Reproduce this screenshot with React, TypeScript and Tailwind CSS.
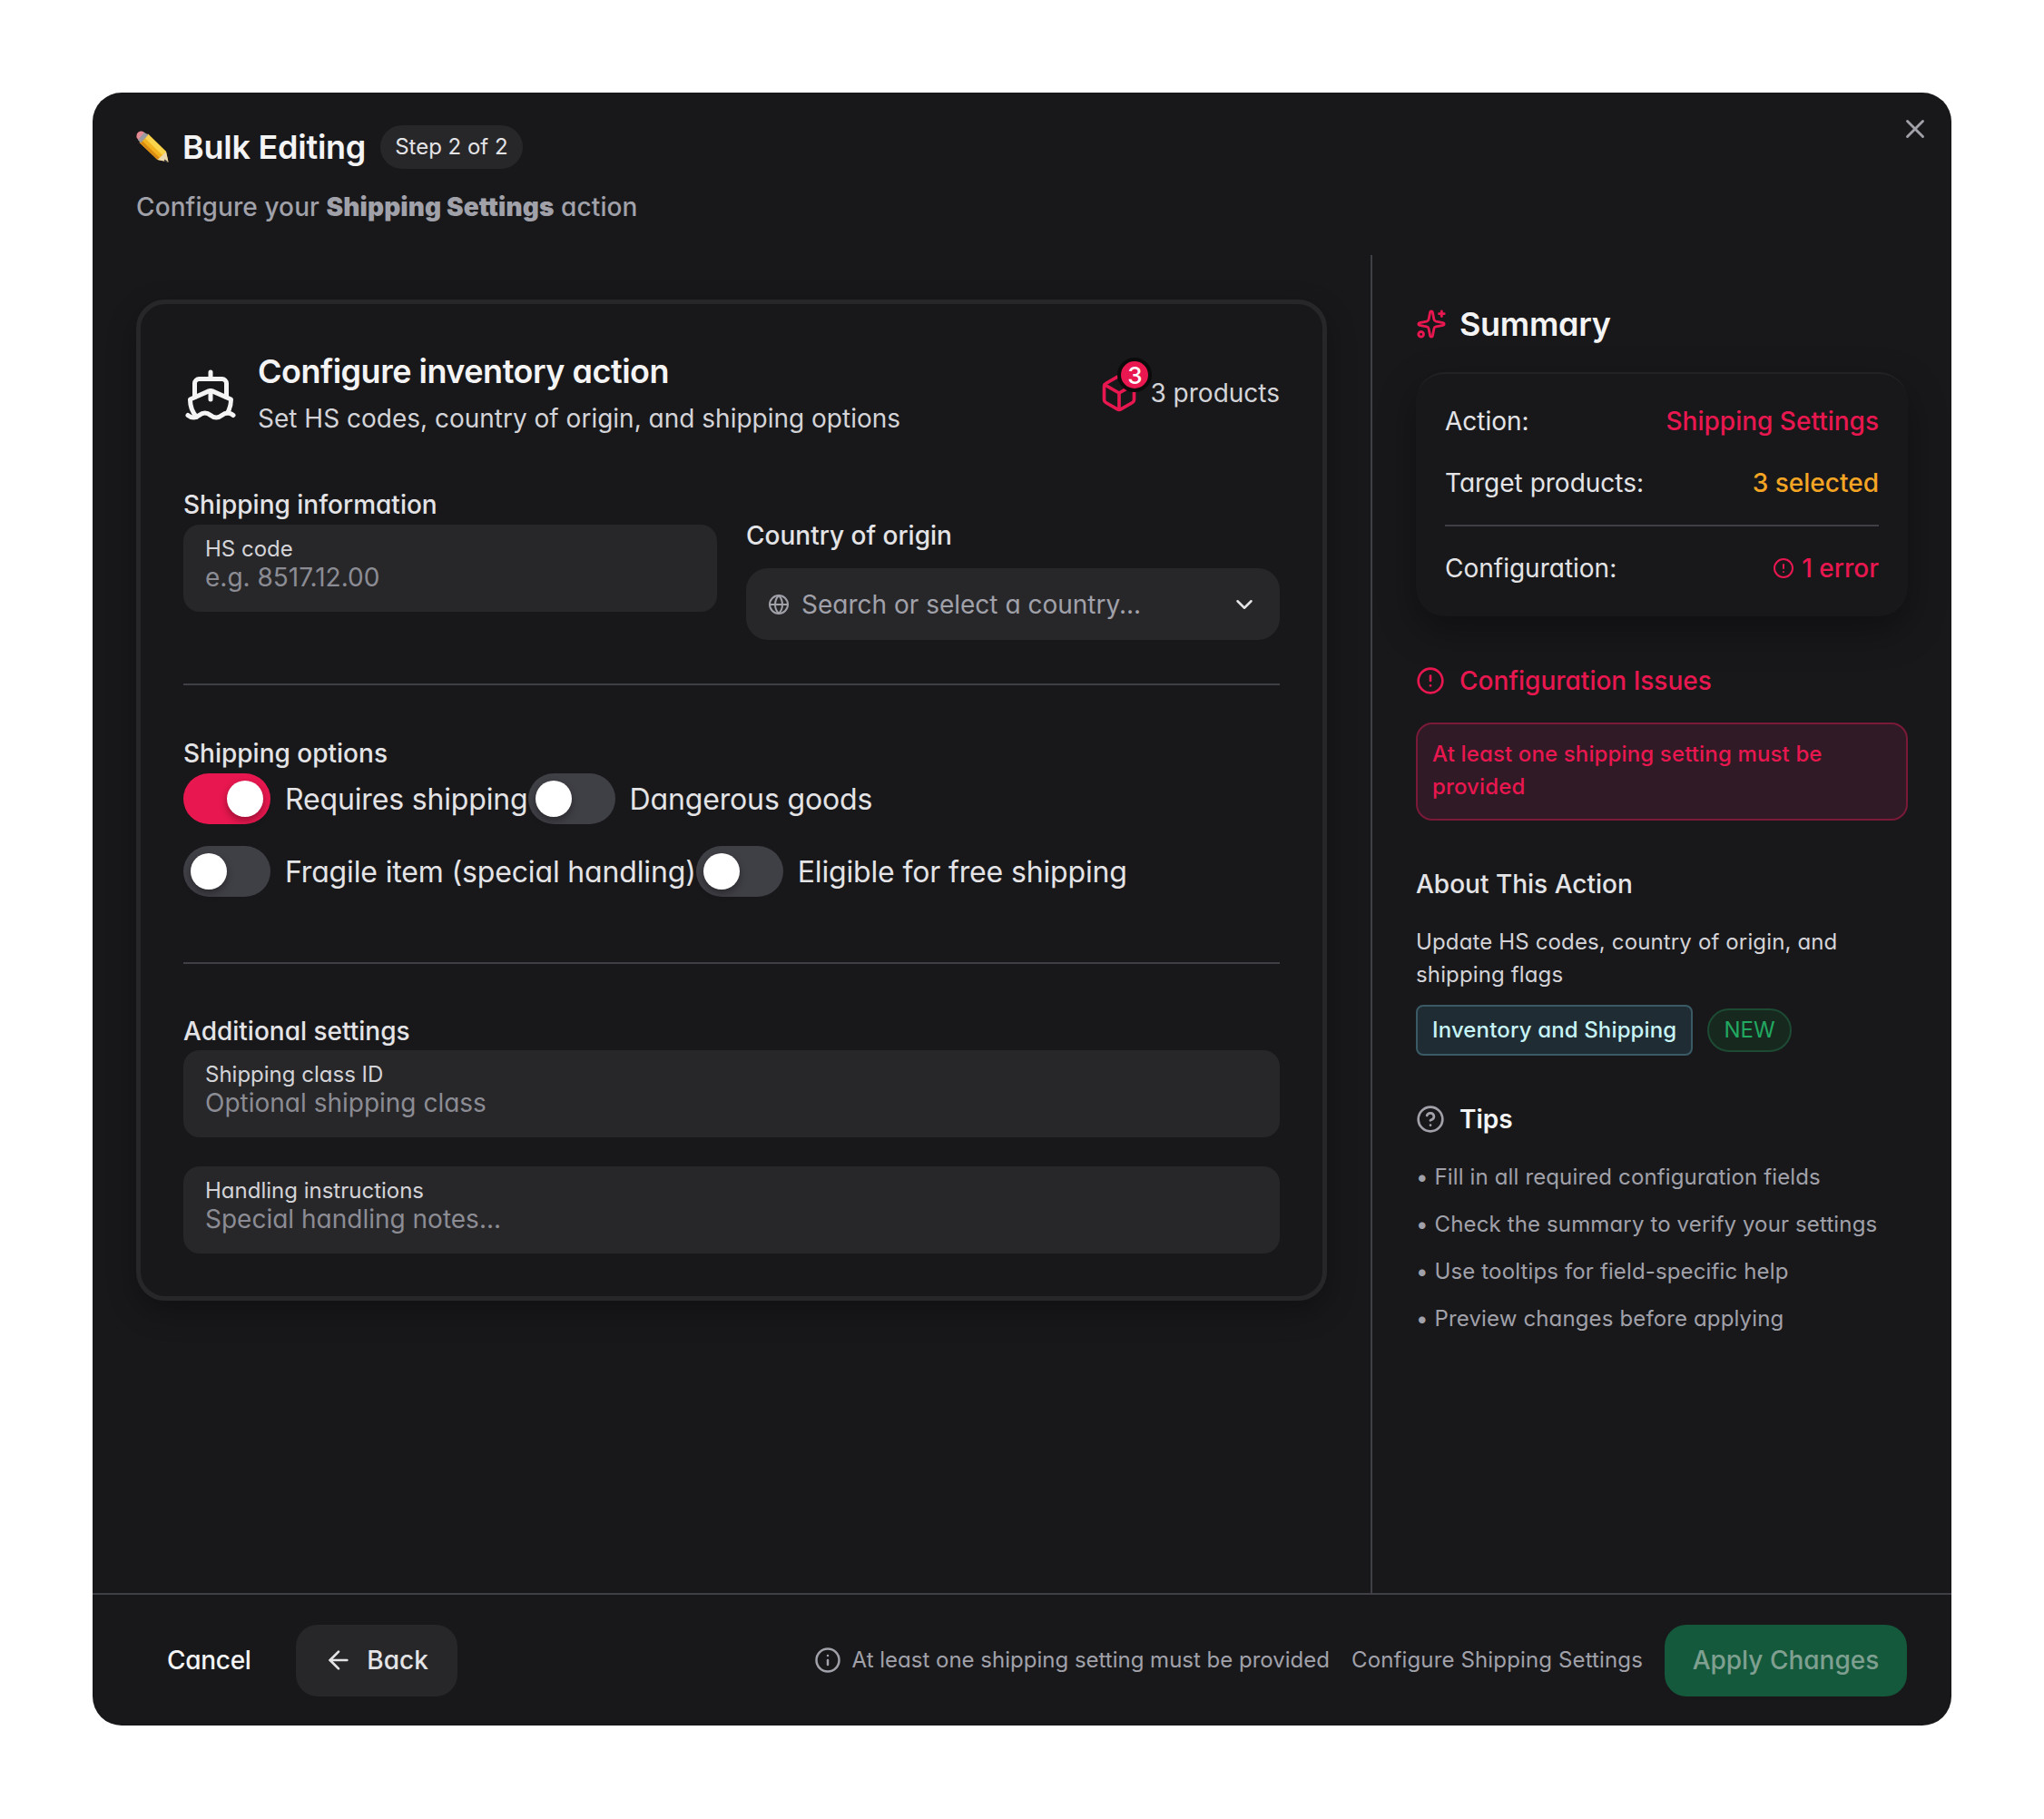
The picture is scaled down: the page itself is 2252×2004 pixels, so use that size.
import { ArrowLeft, Box, ChevronDown, CircleAlert, CircleHelp, Globe, Info, Ship, Sparkles, X } from "lucide-react"

function Pencil() {
  return (
    <svg width="36" height="36" viewBox="0 0 36 36" className="shrink-0">
      <path d="M3.500 13 L13 3.500 L33 23 L35.500 34.500 L23.500 32 Z" fill="#f5b21f" />
      <path d="M9 7.500 L13 3.500 L33 23 L29 27 Z" fill="#fcd34d" />
      <path d="M3.500 13 L6 10.500 L26 30 L23.500 32 Z" fill="#d98a13" />
      <path d="M0.500 7.500 Q0 3 2.500 1.500 Q5.500 -0.500 8.500 1.500 L10 3 L3 11 Z" fill="#e58a93" />
      <path d="M2 10 L9 2 L13.500 4.500 L5 13.500 Z" fill="#9a9aa0" />
      <path d="M23.500 32 L29 27 L33 23 L35.500 34.500 Z" fill="#efd9b0" />
      <path d="M31.500 31.500 L35.500 34.500 L30.500 33.800 Z" fill="#3a3a3a" />
    </svg>
  )
}

function Toggle({ on, label }: { on?: boolean; label: string }) {
  return (
    <div className="flex items-center gap-4">
      <div className={`flex h-14 w-24 items-center rounded-full p-2 ${on ? "justify-end bg-[#e8174f]" : "justify-start bg-[#3f3f46]"}`}>
        <div className="size-10 rounded-full bg-white shadow-[0_4px_8px_rgba(0,0,0,0.35)]" />
      </div>
      <span className="mt-[2px] text-[32px] leading-[48px] tracking-[-0.15px] text-[#e4e4e7]">{label}</span>
    </div>
  )
}

function InlineField({ label, value }: { label: string; value: string }) {
  return (
    <div className="h-24 rounded-[18px] bg-[#27272a] px-6 pt-3">
      <div className="text-2xl leading-[30px] text-[#d4d4d8]">{label}</div>
      <div className="text-[28px] leading-[32px] text-[#8c8c94]">{value}</div>
    </div>
  )
}

function SummaryRow({ label, children }: { label: string; children: React.ReactNode }) {
  return (
    <div className="flex items-center justify-between text-[28px] leading-[44px]">
      <span className="text-[#e4e4e7]">{label}</span>
      {children}
    </div>
  )
}

const tips = [
  "Fill in all required configuration fields",
  "Check the summary to verify your settings",
  "Use tooltips for field-specific help",
  "Preview changes before applying",
]

export default function App() {
  return (
    <div className="min-h-[2004px] bg-white pl-[102px] pt-[102px] font-[Inter,sans-serif] [font-feature-settings:'cv11']">
      <div className="relative flex h-[1799px] w-[2048px] flex-col rounded-[32px] bg-[#18181b]">
        <button className="absolute right-[23px] top-[23px] text-[#a1a1aa]">
          <X size={34} />
        </button>

        {/* Header */}
        <div className="h-[179px] shrink-0 px-12 pt-9">
          <div className="flex items-center">
            <Pencil />
            <h1 className="ml-[15px] text-4xl font-semibold leading-[48px] tracking-[-0.25px] text-[#f4f4f5]">Bulk Editing</h1>
            <span className="ml-4 rounded-full bg-[#27272a] px-4 py-[6px] text-2xl leading-[36px] text-[#e4e4e7]">Step 2 of 2</span>
          </div>
          <p className="mt-5 text-[28px] font-medium leading-[44px] tracking-[0.1px] text-[#a1a1aa]">
            Configure your <b className="font-black">Shipping Settings</b> action
          </p>
        </div>

        <div className="flex min-h-0 flex-1">
          {/* Left column */}
          <div className="flex-1 pl-12 pr-12 pt-[49px]">
            <div className="h-[1103px] rounded-[32px] border-[5px] border-[#27272a] px-[47px] shadow-[0_12px_32px_rgba(0,0,0,0.3)]">
              <div className="flex items-start justify-between pt-[50px]">
                <div className="flex items-center gap-[22px]">
                  <Ship size={60} strokeWidth={2} className="text-[#f4f4f5]" />
                  <div>
                    <h2 className="text-4xl font-semibold leading-[48px] tracking-[-0.5px] text-[#f4f4f5]">Configure inventory action</h2>
                    <p className="mt-1 text-[28px] leading-[48px] text-[#d4d4d8]">Set HS codes, country of origin, and shipping options</p>
                  </div>
                </div>
                <div className="mt-[26px] flex items-center gap-3">
                  <div className="relative size-11">
                    <Box size={44} className="text-[#e8174f]" />
                    <span className="absolute left-[20px] top-[-17px] flex size-[38px] items-center justify-center rounded-full border-4 border-[#0b0b0c] bg-[#e8174f] text-[26px] font-medium text-white">3</span>
                  </div>
                  <span className="text-[28px] leading-[44px] text-[#d4d4d8]">3 products</span>
                </div>
              </div>

              <div className="mt-[51px] flex gap-8">
                <div className="flex-1">
                  <div className="text-[28px] font-medium leading-[40px] text-[#e4e4e7]">Shipping information</div>
                  <div className="mt-[2px]">
                    <InlineField label="HS code" value="e.g. 8517.12.00" />
                  </div>
                </div>
                <div className="flex-1 pt-[32px]">
                  <div className="text-[28px] font-medium leading-[44px] text-[#e4e4e7]">Country of origin</div>
                  <div className="mt-[14px] flex h-[79px] items-center rounded-[24px] bg-[#27272a] px-6 text-[#a1a1aa]">
                    <Globe size={24} />
                    <span className="ml-[13px] flex-1 text-[28px]">Search or select a country...</span>
                    <ChevronDown size={30} className="text-[#e4e4e7]" />
                  </div>
                </div>
              </div>

              <div className="mt-[48px] h-[2px] bg-[#3f3f46]" />

              <div className="mt-[55px] text-[28px] font-medium leading-[40px] text-[#e4e4e7]">Shipping options</div>
              <div className="mt-[2px] flex flex-col gap-6">
                <div className="flex">
                  <Toggle on label="Requires shipping" />
                  <Toggle label="Dangerous goods" />
                </div>
                <div className="flex">
                  <Toggle label="Fragile item (special handling)" />
                  <Toggle label="Eligible for free shipping" />
                </div>
              </div>

              <div className="mt-[72px] h-[2px] bg-[#3f3f46]" />

              <div className="mt-[54px] text-[28px] font-medium leading-[40px] text-[#e4e4e7]">Additional settings</div>
              <div className="mt-px flex flex-col gap-8">
                <InlineField label="Shipping class ID" value="Optional shipping class" />
                <InlineField label="Handling instructions" value="Special handling notes..." />
              </div>
            </div>
          </div>

          {/* Summary column */}
          <div className="w-[640px] shrink-0 border-l-2 border-[#3f3f46] px-12 pt-[52px]">
            <div className="flex items-center gap-[14px]">
              <Sparkles size={34} className="text-[#e8174f]" />
              <h3 className="text-4xl font-semibold leading-[48px] tracking-[-0.3px] text-[#f4f4f5]">Summary</h3>
            </div>

            <div className="mt-[29px] h-[269px] rounded-[32px] border-t-2 border-[#222226] bg-[#18181b] px-8 pt-[30px] shadow-[0_16px_40px_rgba(0,0,0,0.35)]">
              <SummaryRow label="Action:">
                <span className="font-medium text-[#e8174f]">Shipping Settings</span>
              </SummaryRow>
              <div className="mt-6">
                <SummaryRow label="Target products:">
                  <span className="font-medium text-[#f5a524]">3 selected</span>
                </SummaryRow>
              </div>
              <div className="mt-[24px] h-[2px] bg-[#3f3f46]" />
              <div className="mt-[24px]">
                <SummaryRow label="Configuration:">
                  <span className="flex items-center gap-2 font-medium text-[#e8174f]">
                    <CircleAlert size={24} />1 error
                  </span>
                </SummaryRow>
              </div>
            </div>

            <div className="mt-[49px] flex items-center gap-[16px] text-[#e8174f]">
              <CircleAlert size={32} />
              <span className="text-[28px] font-medium leading-[44px]">Configuration Issues</span>
            </div>
            <div className="mt-[24px] rounded-[18px] border-2 border-[#7a1a38] bg-[#2f1a25] px-4 pb-[17px] pt-[15px] text-2xl font-medium leading-[36px] tracking-[0.14px] text-[#e8174f]">
              At least one shipping setting must be provided
            </div>

            <h4 className="mt-[48px] text-[28px] font-medium leading-[44px] text-[#e4e4e7]">About This Action</h4>
            <p className="mt-[24px] text-2xl leading-[36px] tracking-[0.14px] text-[#d4d4d8]">Update HS codes, country of origin, and shipping flags</p>
            <div className="mt-[15px] flex items-center gap-4">
              <span className="rounded-[8px] border-2 border-[#3a5a66] bg-[#202c33] px-4 py-[6px] text-2xl font-medium leading-[40px] tracking-[0.14px] text-[#c6f4f6]">Inventory and Shipping</span>
              <span className="rounded-full border-2 border-[#1d4a33] bg-[#17291f] px-4 py-[3px] text-2xl leading-[38px] text-[#22a861]">NEW</span>
            </div>

            <div className="mt-[48px] flex items-center gap-[16px]">
              <CircleHelp size={32} className="text-[#a1a1aa]" />
              <span className="text-[28px] font-semibold leading-[44px] text-[#f4f4f5]">Tips</span>
            </div>
            <ul className="mt-[24px] flex flex-col gap-[16px] text-2xl leading-[36px] tracking-[0.14px] text-[#a1a1aa]">
              {tips.map((t) => (
                <li key={t}>• {t}</li>
              ))}
            </ul>
          </div>
        </div>

        {/* Footer */}
        <div className="flex h-[146px] shrink-0 items-center border-t-2 border-[#3f3f46] pl-12 pr-[49px]">
          <button className="px-[34px] text-[28px] font-medium tracking-[-0.3px] text-[#f4f4f5]">Cancel</button>
          <button className="ml-[15px] flex h-[79px] w-[178px] items-center justify-center gap-[15px] rounded-[24px] bg-[#27272a] text-[28px] font-medium text-[#e4e4e7]">
            <ArrowLeft size={32} />
            Back
          </button>
          <div className="ml-auto flex items-center gap-3 text-2xl text-[#a1a1aa]">
            <Info size={30} />
            <span>At least one shipping setting must be provided</span>
          </div>
          <span className="ml-6 text-2xl tracking-[0.14px] text-[#a1a1aa]">Configure Shipping Settings</span>
          <button className="ml-6 h-[79px] w-[267px] rounded-[24px] bg-[#14593c] text-[28px] font-medium text-[#7f9f90]">Apply Changes</button>
        </div>
      </div>
    </div>
  )
}
